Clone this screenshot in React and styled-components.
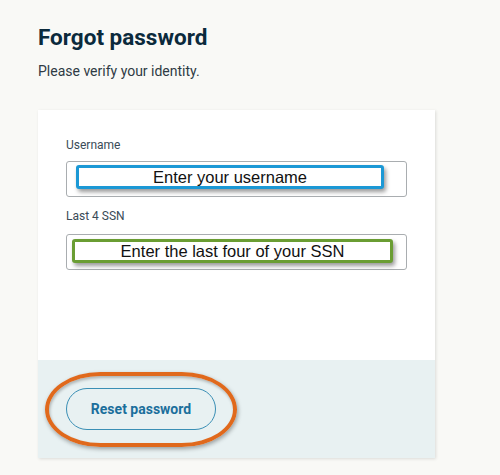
import styled, { createGlobalStyle } from "styled-components";

const GlobalStyle = createGlobalStyle`
  html, body {
    margin: 0;
    padding: 0;
    background: #f9f9f6;
    font-family: Roboto, "Liberation Sans", Arial, sans-serif;
  }
`;

const Page = styled.main`
  padding: 23px 38px 0;
  min-height: 475px;
  box-sizing: border-box;
`;

const Title = styled.h1`
  margin: 0;
  font-size: 22.5px;
  line-height: 28px;
  font-weight: 700;
  color: #0b2a3c;
`;

const Subtitle = styled.p`
  margin: 10px 0 29px;
  font-size: 14px;
  line-height: 20px;
  color: #2f3b44;
`;

const Card = styled.section`
  width: 397px;
  background: #fff;
  box-shadow: 1px 1px 3px rgba(0, 0, 0, 0.12);
`;

const Body = styled.div`
  padding: 28px 28px 90px;
`;

const Label = styled.label`
  display: block;
  font-size: 12px;
  line-height: 14px;
  color: #3a4b57;
  margin: ${(p) => (p.$first ? "0" : "12px")} 0 ${(p) => p.$gap}px;
`;

const Field = styled.div`
  height: 36px;
  box-sizing: border-box;
  border: 1px solid #a9adb0;
  border-radius: 3px;
  padding: ${(p) => p.$top}px 0 0 ${(p) => p.$left}px;
`;

const Note = styled.div`
  width: ${(p) => p.$w}px;
  height: ${(p) => p.$h}px;
  box-sizing: border-box;
  border: 3px solid ${(p) => p.$color};
  border-radius: 3px;
  background: #fff;
  box-shadow: 2px 3px 4px rgba(0, 0, 0, 0.4);
  display: flex;
  align-items: center;
  justify-content: center;
  font-family: "Liberation Sans", Arial, sans-serif;
  font-size: 16.5px;
  color: #111;
`;

const Footer = styled.div`
  background: #e8f1f2;
  padding: 28px 28px 28px;
`;

const ButtonWrap = styled.div`
  position: relative;
  width: 150px;
`;

const ResetButton = styled.button`
  width: 150px;
  height: 42px;
  border: 1px solid #3a8fb5;
  border-radius: 21px;
  background: transparent;
  font-family: Roboto, "Liberation Sans", Arial, sans-serif;
  font-size: 14px;
  font-weight: 700;
  color: #1b6f9c;
  cursor: pointer;
`;

const Circle = styled.span`
  position: absolute;
  left: -21px;
  top: -16px;
  width: 192px;
  height: 75px;
  box-sizing: border-box;
  border: 4px solid #e0691c;
  border-radius: 56px / 38px;
  box-shadow: 1px 2px 4px rgba(0, 0, 0, 0.35),
    inset 1px 2px 3px rgba(0, 0, 0, 0.25);
  pointer-events: none;
`;

export default function App() {
  return (
    <>
      <GlobalStyle />
      <Page>
        <Title>Forgot password</Title>
        <Subtitle>Please verify your identity.</Subtitle>
        <Card>
          <Body>
            <Label $first $gap={9}>Username</Label>
            <Field $top={3} $left={9}>
              <Note $w={308} $h={24} $color="#1b98d5">
                Enter your username
              </Note>
            </Field>
            <Label $gap={11}>Last 4 SSN</Label>
            <Field $top={4} $left={5}>
              <Note $w={321} $h={24} $color="#6a9d33">
                Enter the last four of your SSN
              </Note>
            </Field>
          </Body>
          <Footer>
            <ButtonWrap>
              <ResetButton>Reset password</ResetButton>
              <Circle />
            </ButtonWrap>
          </Footer>
        </Card>
      </Page>
    </>
  );
}
